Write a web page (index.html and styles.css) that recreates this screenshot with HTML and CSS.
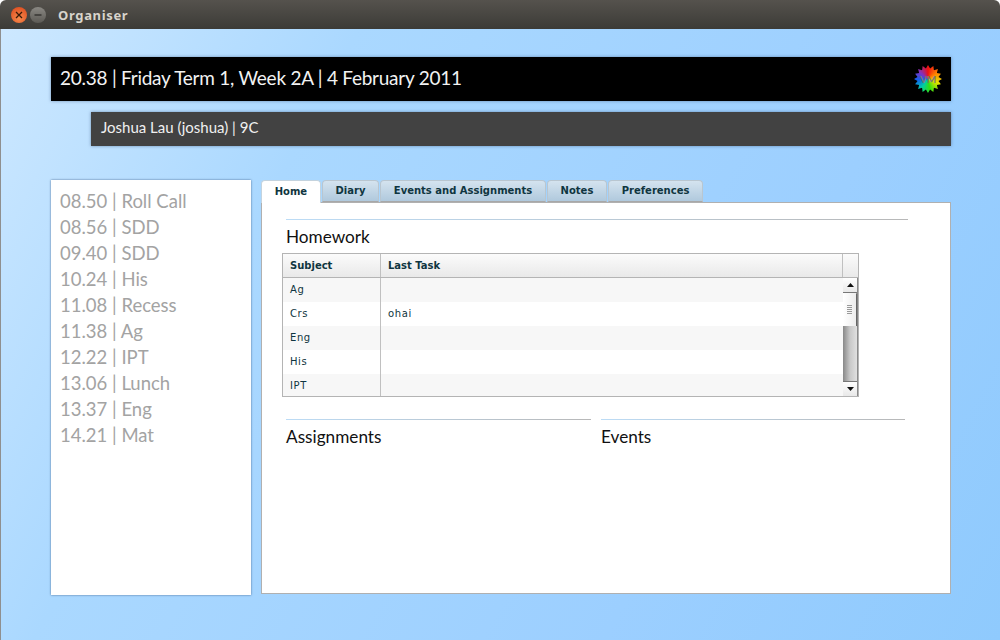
FILE: index.html
```html
<!DOCTYPE html>
<html lang="en">
<head>
  <meta charset="UTF-8">
  <title>Organiser</title>
  <link rel="stylesheet" href="styles.css">
</head>
<body>

<div class="titlebar">
  <div class="win-buttons">
    <span class="win-btn close">
      <svg width="8" height="8" viewBox="0 0 8 8"><path d="M1 1L7 7M7 1L1 7" stroke="#3a1a08" stroke-width="1.3"/></svg>
    </span>
    <span class="win-btn minimise">
      <svg width="8" height="8" viewBox="0 0 8 8"><path d="M0.5 4H7.5" stroke="#33322e" stroke-width="1.4"/></svg>
    </span>
  </div>
  <span class="win-title">Organiser</span>
</div>

<div class="content">
  <div class="banner">
    <span class="banner-text">20.38 | Friday Term 1, Week 2A | 4 February 2011</span>
    <div class="logo"><span>VM</span></div>
  </div>
  <div class="userbar">Joshua Lau (joshua) | 9C</div>

  <div class="main">
    <ul class="timetable">
      <li>08.50 | Roll Call</li>
      <li>08.56 | SDD</li>
      <li>09.40 | SDD</li>
      <li>10.24 | His</li>
      <li>11.08 | Recess</li>
      <li>11.38 | Ag</li>
      <li>12.22 | IPT</li>
      <li>13.06 | Lunch</li>
      <li>13.37 | Eng</li>
      <li>14.21 | Mat</li>
    </ul>

    <div class="tabs-wrap">
      <div class="tabs">
        <div class="tab active">Home</div>
        <div class="tab">Diary</div>
        <div class="tab">Events and Assignments</div>
        <div class="tab">Notes</div>
        <div class="tab">Preferences</div>
      </div>

      <div class="panel">
        <div class="section homework">
          <h3>Homework</h3>
        </div>

        <div class="grid">
          <div class="grid-head">
            <div class="cell-subject">Subject</div>
            <div class="cell-task">Last Task</div>
            <div class="cell-corner"></div>
          </div>
          <div class="grid-body">
            <div class="rows">
              <div class="row"><div class="cell-subject">Ag</div><div class="cell-task"></div></div>
              <div class="row"><div class="cell-subject">Crs</div><div class="cell-task">ohai</div></div>
              <div class="row"><div class="cell-subject">Eng</div><div class="cell-task"></div></div>
              <div class="row"><div class="cell-subject">His</div><div class="cell-task"></div></div>
              <div class="row"><div class="cell-subject">IPT</div><div class="cell-task"></div></div>
            </div>
            <div class="scrollbar">
              <div class="arrow"><svg width="7" height="4" viewBox="0 0 7 4"><path d="M3.5 0L7 4H0Z" fill="#111"/></svg></div>
              <div class="thumb"><span></span><span></span><span></span><span></span><span></span></div>
              <div class="track"></div>
              <div class="arrow"><svg width="7" height="4" viewBox="0 0 7 4"><path d="M0 0H7L3.5 4Z" fill="#111"/></svg></div>
            </div>
          </div>
        </div>

        <div class="lower">
          <div class="section assignments"><h3>Assignments</h3></div>
          <div class="section events"><h3>Events</h3></div>
        </div>
      </div>
    </div>
  </div>
</div>

</body>
</html>
```

FILE: styles.css
```css
html, body {
  margin: 0;
  height: 640px;
  overflow: hidden;
}
body {
  background: #fff;
  font-family: Lato, sans-serif;
  display: flex;
  flex-direction: column;
}

/* window chrome */
.titlebar {
  height: 29px;
  flex: none;
  display: flex;
  align-items: center;
  border-radius: 6px 6px 0 0;
  background: linear-gradient(#55524d, #3c3b37);
}
.win-buttons {
  display: flex;
  gap: 3px;
  margin-left: 11px;
}
.win-btn {
  width: 16px;
  height: 16px;
  border-radius: 50%;
  display: flex;
  align-items: center;
  justify-content: center;
}
.close {
  background: radial-gradient(circle at 50% 70%, #f78a4c, #d9451a);
}
.minimise {
  background: linear-gradient(#8a8883, #5c5a55);
}
.win-title {
  margin-left: 12px;
  font-family: "Noto Sans", sans-serif;
  font-size: 13px;
  font-weight: 700;
  letter-spacing: 0.65px;
  color: #d8d4cc;
}

.content {
  flex: 1;
  box-sizing: border-box;
  padding: 28px 49px 0 50px;
  background: linear-gradient(118deg, #cde8ff 0%, #aad8ff 27%, #9ccfff 70%, #8fcafd 100%);
  border-left: 1px solid #8f8f8f;
}

/* header bars */
.banner {
  height: 44px;
  background: #000;
  color: #f2f2f2;
  font-size: 19px;
  letter-spacing: -0.25px;
  display: flex;
  align-items: center;
  justify-content: space-between;
  padding: 0 9px 0 9px;
  box-shadow: 0 0 3px rgba(60, 90, 130, 0.6);
}
.banner-text {
  margin-top: -3px;
}
.logo {
  width: 28px;
  height: 28px;
  display: flex;
  align-items: center;
  justify-content: center;
  background: conic-gradient(#f01010, #ff8a00 60deg, #e8e000 110deg, #30e010 170deg, #00d0a0 215deg, #1060f0 265deg, #8030c0 310deg, #f01010);
  clip-path: polygon(50% 0, 57.4% 12.7%, 69.1% 3.8%, 71.1% 18.4%, 85.4% 14.6%, 81.6% 28.9%, 96.2% 30.9%, 87.3% 42.6%, 100% 50%, 87.3% 57.4%, 96.2% 69.1%, 81.6% 71.1%, 85.4% 85.4%, 71.1% 81.6%, 69.1% 96.2%, 57.4% 87.3%, 50% 100%, 42.6% 87.3%, 30.9% 96.2%, 28.9% 81.6%, 14.6% 85.4%, 18.4% 71.1%, 3.8% 69.1%, 12.7% 57.4%, 0 50%, 12.7% 42.6%, 3.8% 30.9%, 18.4% 28.9%, 14.6% 14.6%, 28.9% 18.4%, 30.9% 3.8%, 42.6% 12.7%);
}
.logo span {
  font-size: 10px;
  font-weight: 700;
  color: #777;
}
.userbar {
  height: 34px;
  line-height: 31px;
  margin: 11px 0 0 40px;
  padding-left: 10px;
  background: #424242;
  color: #f0f0f0;
  font-size: 15px;
  box-shadow: 0 0 3px rgba(60, 90, 130, 0.6);
}

.main {
  display: flex;
  gap: 10px;
  margin-top: 34px;
}

/* left column */
.timetable {
  list-style: none;
  margin: 0;
  padding: 8px 0 0 9px;
  width: 200px;
  height: 415px;
  box-sizing: border-box;
  background: #fff;
  box-shadow: 0 0 2px rgba(50, 80, 120, 0.8);
  color: #a3a3a3;
  font-size: 18.5px;
}
.timetable li {
  height: 26px;
  line-height: 26px;
}

/* tabs */
.tabs-wrap {
  flex: 1;
}
.tabs {
  display: flex;
  height: 22px;
  align-items: flex-end;
  position: relative;
  z-index: 1;
}
.tab {
  height: 22px;
  line-height: 20px;
  box-sizing: border-box;
  padding: 0 12.7px;
  margin-right: 1px;
  font-family: "DejaVu Sans", sans-serif;
  font-size: 10px;
  font-weight: 700;
  color: #0f3540;
  background: linear-gradient(#d4e3ef, #b0c9dd);
  border: 1px solid #b9c6d0;
  border-bottom-color: #a8a8a8;
  border-radius: 4px 4px 0 0;
}
.tab.active {
  height: 23px;
  line-height: 22px;
  background: #fff;
  border-color: #c4d3de;
  border-bottom: none;
  margin-bottom: -1px;
}
.panel {
  height: 392px;
  box-sizing: border-box;
  background: #fff;
  border: 1px solid #b0b0b0;
  padding: 16px 0 0 20px;
}

.section {
  border-top: 1px solid;
  border-image: linear-gradient(to right, #bcdcf6, #b8b8b8) 1;
  padding-top: 6px;
}
.section h3 {
  margin: 0;
  font-size: 17.2px;
  font-weight: 400;
  line-height: 22px;
  color: #111;
}
.homework {
  margin: 0 42px 0 4px;
}

/* table */
.grid {
  width: 577px;
  height: 144px;
  box-sizing: border-box;
  margin-top: 5px;
  border: 1px solid #b4b4b4;
  font-family: "DejaVu Sans", sans-serif;
  font-size: 10px;
  color: #0f3540;
}
.grid-head {
  display: flex;
  height: 24px;
  line-height: 23px;
  font-weight: 700;
  box-sizing: border-box;
  border-bottom: 1px solid #b4b4b4;
  background: linear-gradient(#fbfbfb, #e9e9e9);
}
.cell-subject {
  width: 98px;
  padding-left: 7px;
  box-sizing: border-box;
  border-right: 1px solid #c0c0c0;
}
.cell-task {
  flex: 1;
  padding-left: 7px;
}
.grid-head .cell-task {
  border-right: 1px solid #c0c0c0;
}
.cell-corner {
  width: 15px;
}
.grid-body {
  display: flex;
  height: 118px;
}
.rows {
  flex: 1;
  overflow: hidden;
}
.row {
  display: flex;
  height: 24px;
  line-height: 23px;
  letter-spacing: 0.6px;
}
.row:nth-child(odd) {
  background: #f7f7f7;
}
.scrollbar {
  width: 15px;
  box-sizing: border-box;
  display: flex;
  flex-direction: column;
  background: #9a9a9a;
  border-right: 1px solid #8a8a8a;
}
.arrow {
  height: 15px;
  box-sizing: border-box;
  background: linear-gradient(#fff, #e8e8e8);
  border-bottom: 1px solid #777;
  display: flex;
  align-items: center;
  justify-content: center;
  flex: none;
}
.arrow:last-child {
  border-bottom: none;
  border-top: 1px solid #777;
}
.thumb {
  height: 33px;
  flex: none;
  box-sizing: border-box;
  width: 13px;
  background: linear-gradient(to right, #fff, #ececec);
  box-shadow: 1px 1px 1px #666;
  display: flex;
  flex-direction: column;
  align-items: center;
  justify-content: center;
  gap: 1px;
}
.thumb span {
  width: 5px;
  height: 1px;
  background: #999;
}
.track {
  flex: 1;
  background: linear-gradient(to right, #888, #c8c8c8 50%, #e0e0e0);
}

.lower {
  display: flex;
  gap: 10px;
  margin: 22px 0 0 4px;
}
.assignments {
  width: 305px;
}
.events {
  width: 304px;
}
```
